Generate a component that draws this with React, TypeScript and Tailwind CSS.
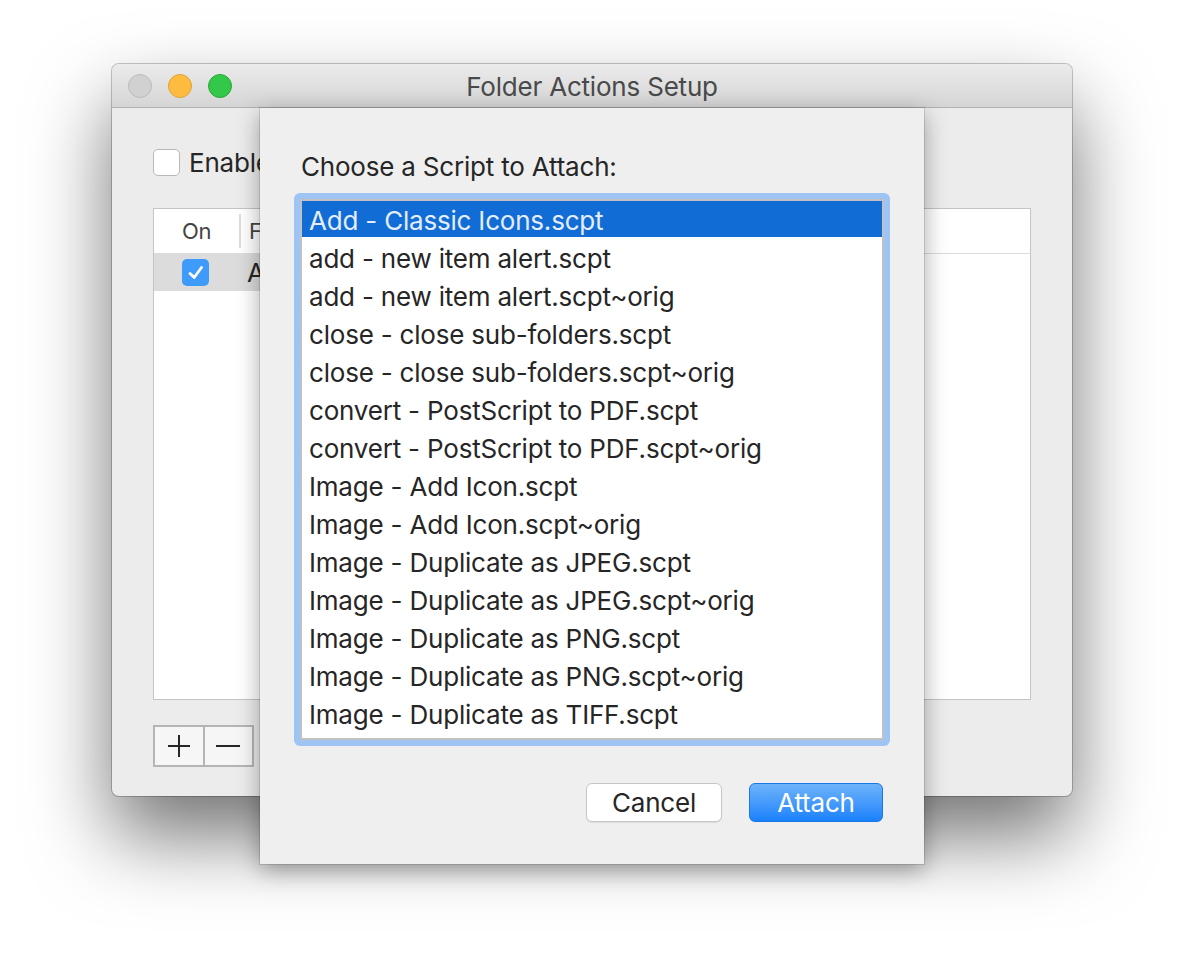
import React from 'react';

const scripts = [
  'Add - Classic Icons.scpt',
  'add - new item alert.scpt',
  'add - new item alert.scpt~orig',
  'close - close sub-folders.scpt',
  'close - close sub-folders.scpt~orig',
  'convert - PostScript to PDF.scpt',
  'convert - PostScript to PDF.scpt~orig',
  'Image - Add Icon.scpt',
  'Image - Add Icon.scpt~orig',
  'Image - Duplicate as JPEG.scpt',
  'Image - Duplicate as JPEG.scpt~orig',
  'Image - Duplicate as PNG.scpt',
  'Image - Duplicate as PNG.scpt~orig',
  'Image - Duplicate as TIFF.scpt',
];

const font = { fontFamily: 'Inter, "Noto Sans", sans-serif' };

export default function App() {
  return (
    <div
      className="w-[1184px] h-[956px] bg-white pt-[64px] pl-[112px] overflow-hidden text-[#262626] tracking-[-0.2px]"
      style={font}
    >
      {/* Main window */}
      <div className="relative w-[960px] h-[732px] rounded-[7px] bg-[#ececec] shadow-[0_0_0_1px_rgba(0,0,0,0.22),0_40px_80px_rgba(0,0,0,0.55)] flex flex-col">
        {/* Title bar */}
        <div className="relative h-[44px] shrink-0 rounded-t-[7px] bg-gradient-to-b from-[#ebebeb] to-[#d5d5d5] border-b border-[#b1b1b1] flex items-center">
          <div className="flex items-center gap-[16px] pl-[16px]">
            <span className="w-[24px] h-[24px] rounded-full bg-[#d1d1d1] border border-[#bcbcbc]" />
            <span className="w-[24px] h-[24px] rounded-full bg-[#fdbc40] border border-[#dea236]" />
            <span className="w-[24px] h-[24px] rounded-full bg-[#34c84a] border border-[#27aa35]" />
          </div>
          <div className="absolute inset-0 flex items-center justify-center text-[26px] text-[#4a4a4a] pointer-events-none translate-y-[1px]">
            Folder Actions Setup
          </div>
        </div>

        {/* Window content (the sheet covers most of it) */}
        <div className="flex flex-col px-[41px] pt-[40px]">
          <div className="flex items-center gap-[9px] h-[28px]">
            <span className="w-[27px] h-[27px] rounded-[5px] bg-white border border-[#b8b8b8]" />
            <span className="whitespace-nowrap text-[26px] leading-none translate-y-[1px]">Enable Folder Actions</span>
          </div>

          {/* Table */}
          <div className="mt-[32px] h-[492px] bg-white border border-[#c4c4c4] flex flex-col">
            <div className="h-[45px] shrink-0 border-b border-[#dcdcdc] flex items-center text-[22px] text-[#444]">
              <span className="pl-[28px] w-[85px]">On</span>
              <span className="w-[2px] h-[34px] bg-[#dedede]" />
              <span className="pl-[8px] whitespace-nowrap">Folder</span>
            </div>
            <div className="h-[37px] w-[400px] bg-[#dcdcdc] flex items-center">
              <span className="ml-[28px] w-[27px] h-[27px] rounded-[5px] bg-[#3f9bfa] flex items-center justify-center">
                <svg width="20" height="20" viewBox="0 0 20 20" fill="none">
                  <path d="M4 10.5 L8.2 14.5 L15.5 4.5" stroke="white" strokeWidth="2.8" strokeLinecap="round" strokeLinejoin="round" />
                </svg>
              </span>
              <span className="ml-[38px] whitespace-nowrap text-[26px]">Applications</span>
            </div>
          </div>

          {/* +/- buttons */}
          <div className="mt-[25px] flex w-[101px] h-[42px] border-2 border-[#b5b5b5] bg-[#f6f6f6]">
            <div className="flex-1 flex items-center justify-center border-r-2 border-[#b5b5b5]">
              <svg width="24" height="24" viewBox="0 0 24 24">
                <path d="M12 1 V23 M1 12 H23" stroke="#262626" strokeWidth="2" />
              </svg>
            </div>
            <div className="flex-1 flex items-center justify-center">
              <svg width="24" height="24" viewBox="0 0 24 24">
                <path d="M0 12 H24" stroke="#262626" strokeWidth="2" />
              </svg>
            </div>
          </div>
        </div>

        {/* Sheet */}
        <div className="absolute left-[148px] top-[44px] w-[664px] h-[756px] bg-[#efefef] shadow-[0_0_0_1px_rgba(0,0,0,0.12),0_6px_22px_rgba(0,0,0,0.35)] flex flex-col">
          <div className="pl-[41px] pt-[43px] h-[75px] text-[26px] leading-[32px]">Choose a Script to Attach:</div>
          <div className="mt-[10px] mx-[34px] h-[553px] rounded-[6px] bg-[#9dc4f2] p-[6px]">
            <div className="h-full bg-white border-2 border-[#c1c1c1] overflow-hidden">
              {scripts.map((s, i) => (
                <div key={s} className="h-[38px]">
                  <div
                    className={`h-[36px] flex items-center pl-[7px] text-[26px] whitespace-nowrap ${
                      i === 0 ? 'bg-[#116cd6] text-[#e3edfb]' : 'text-[#262626]'
                    }`}
                  >
                    <span className="translate-y-[1px]">{s}</span>
                  </div>
                </div>
              ))}
            </div>
          </div>
          <div className="mt-[37px] pr-[41px] flex justify-end gap-[27px]">
            <button className="w-[136px] h-[39px] rounded-[6px] bg-white border border-[#c6c6c6] shadow-[0_1px_1px_rgba(0,0,0,0.08)] text-[26px] text-[#262626] leading-none">
              Cancel
            </button>
            <button className="w-[134px] h-[39px] rounded-[6px] bg-gradient-to-b from-[#6cb3fa] to-[#1681fb] border border-[#1a78e6] text-[26px] text-white leading-none">
              Attach
            </button>
          </div>
        </div>
      </div>
    </div>
  );
}
